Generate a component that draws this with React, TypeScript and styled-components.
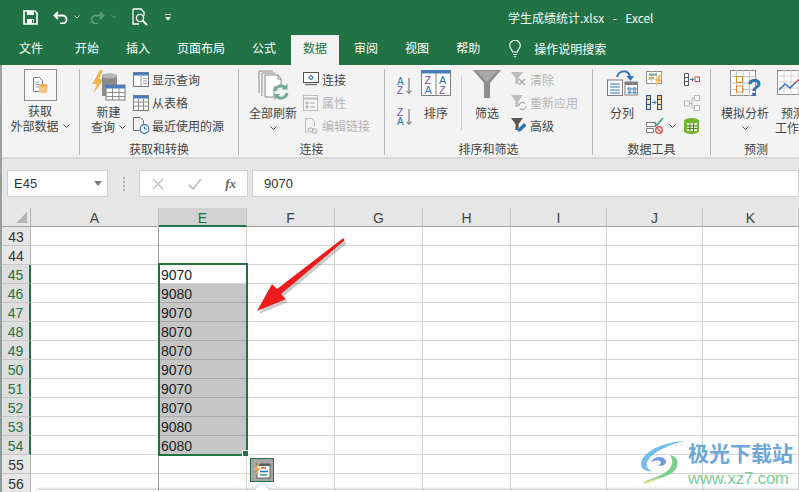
import React from 'react';
import styled, { createGlobalStyle } from 'styled-components';

const GREEN = '#217346';
const CJK = '"Noto Sans CJK SC", "Liberation Sans", sans-serif';
const SHEET_FONT = '"Liberation Sans", "Noto Sans CJK SC", sans-serif';

const GlobalStyle = createGlobalStyle`
  html, body { margin: 0; padding: 0; background: #fff; overflow: hidden; }
  * { box-sizing: border-box; }
`;

const Page = styled.div`
  position: relative;
  display: flex;
  width: 799px;
  height: 492px;
  overflow: hidden;
  font-family: ${CJK};
  font-size: 12px;
  color: #444;
`;

const WindowEdge = styled.div`
  flex: 0 0 2px;
  background: linear-gradient(#217346 0, #217346 65px, #9aa3a2 65px, #8c9a9a 100%);
`;

const Main = styled.div`
  flex: 1;
  min-width: 0;
  display: flex;
  flex-direction: column;
`;

/* title bar */
const TitleBar = styled.div`
  height: 34px;
  background: ${GREEN};
  display: flex;
  align-items: center;
  color: #fff;
`;

const Qat = styled.div`
  width: 506px;
  height: 100%;
  display: flex;
  align-items: center;
  padding-left: 21px;
`;

const QatSlot = styled.span<{ $w: number }>`
  width: ${(p) => p.$w}px;
  display: flex;
  align-items: center;
`;

const TitleText = styled.div`
  white-space: pre;
  word-spacing: 1.5px;
  color: #f2f7f4;
  font-family: ${CJK};
`;

/* tabs */
const TabRow = styled.div`
  height: 31px;
  background: ${GREEN};
  display: flex;
  padding-left: 5px;
  padding-top: 1px;
  gap: 3px;
`;

const Tab = styled.div<{ $active?: boolean }>`
  padding: 0 12px;
  height: 30px;
  line-height: 26px;
  background: ${(p) => (p.$active ? '#f3f3f3' : 'transparent')};
  color: ${(p) => (p.$active ? GREEN : '#fff')};
  &:first-child { margin-right: 5px; }
`;

const TellMe = styled.div`
  display: flex;
  align-items: center;
  height: 27px;
  margin-left: 14px;
  gap: 13px;
  color: #fff;
`;

/* ribbon */
const Ribbon = styled.div`
  height: 94px;
  flex: none;
  background: #f3f3f3;
  border-bottom: 2px solid #d8d8d8;
  padding-top: 4px;
  display: flex;
  overflow: hidden;
`;

const Group = styled.div<{ $w: number; $last?: boolean }>`
  flex: none;
  width: ${(p) => p.$w}px;
  height: 86px;
  display: flex;
  flex-direction: column;
  justify-content: space-between;
  border-right: ${(p) => (p.$last ? 'none' : '1px solid #b4b4b4')};
`;

const GroupBody = styled.div`
  display: flex;
  align-items: flex-start;
`;

const GroupLabel = styled.div<{ $pad?: number }>`
  text-align: center;
  line-height: 13px;
  padding-right: ${(p) => p.$pad || 0}px;
`;

const Large = styled.div<{ $w: number; $ml?: number }>`
  flex: none;
  width: ${(p) => p.$w}px;
  margin-left: ${(p) => p.$ml || 0}px;
  display: flex;
  flex-direction: column;
  align-items: center;
  white-space: nowrap;
`;

const LargeIcon = styled.div<{ $h?: number }>`
  height: ${(p) => p.$h || 34}px;
  display: flex;
  align-items: flex-start;
  justify-content: center;
  padding-top: 1px;
`;

const LargeLine = styled.div`
  height: 15px;
  line-height: 15px;
  display: flex;
  align-items: center;
  justify-content: center;
  gap: 4px;
`;

const BoxedIcon = styled.div`
  width: 33px;
  height: 32px;
  margin-top: -1px;
  border: 1px solid #8a8a8a;
  background: #f8f8f8;
  display: flex;
  align-items: center;
  justify-content: center;
`;

const SmallCol = styled.div<{ $ml?: number }>`
  flex: none;
  margin-top: -1px;
  margin-left: ${(p) => p.$ml || 0}px;
  display: flex;
  flex-direction: column;
`;

const SmallItem = styled.div<{ $off?: boolean }>`
  height: 23px;
  display: flex;
  align-items: center;
  white-space: nowrap;
  color: ${(p) => (p.$off ? '#b4b4b4' : '#444')};
`;

const SmallIcon = styled.span`
  width: 19px;
  display: flex;
  align-items: center;
`;

const SortCol = styled.div`
  flex: none;
  margin: 8px 0 0 12px;
  display: flex;
  flex-direction: column;
  gap: 13px;
`;

const ThinRule = styled.div`
  flex: none;
  width: 1px;
  height: 55px;
  margin: 6px 0 0 7px;
  background: #cfcfcf;
`;

/* formula bar */
const FormulaBar = styled.div`
  height: 49px;
  flex: none;
  background: #e6e6e6;
  display: flex;
  align-items: center;
  padding-left: 5px;
`;

const BarBox = styled.div<{ $w?: number; $ml?: number }>`
  height: 27px;
  margin-left: ${(p) => p.$ml || 0}px;
  ${(p) => (p.$w ? `width: ${p.$w}px; flex: none;` : 'flex: 1;')}
  background: #fff;
  border: 1px solid #d0d0d0;
  display: flex;
  align-items: center;
`;

const NameText = styled.span`
  flex: 1;
  padding-left: 6px;
  font-size: 13px;
  font-family: ${SHEET_FONT};
  color: #333;
`;

const Grip = styled.span`
  width: 31px;
  flex: none;
  display: flex;
  flex-direction: column;
  align-items: center;
  gap: 2px;
  i {
    width: 2px;
    height: 2px;
    background: #b0b0b0;
  }
`;

const FxSlots = styled.div`
  display: flex;
  align-items: center;
  justify-content: space-between;
  width: 100%;
  padding: 0 11px 0 12px;
`;

const FormulaText = styled.span`
  padding-left: 11px;
  font-size: 13px;
  font-family: ${SHEET_FONT};
  color: #333;
`;

/* sheet */
const Sheet = styled.div`
  position: relative;
  flex: 1;
  background: #fff;
  display: grid;
  grid-template-columns: 29px 128px repeat(4, 88px) repeat(3, 96px) 4px;
  grid-auto-rows: 19px;
  font-family: ${SHEET_FONT};
  font-size: 14px;
  overflow: hidden;
`;

const Corner = styled.div`
  background: #e6e6e6;
  border-right: 1px solid #b5b5b5;
  border-bottom: 1px solid #9f9f9f;
  display: flex;
  align-items: center;
  justify-content: flex-end;
  padding-right: 3px;
`;

const ColHead = styled.div<{ $sel?: boolean }>`
  background: ${(p) => (p.$sel ? '#d2d2d2' : '#e6e6e6')};
  color: ${(p) => (p.$sel ? GREEN : '#444')};
  border-right: 1px solid #c6c6c6;
  border-bottom: ${(p) => (p.$sel ? `2px solid ${GREEN}` : '1px solid #9f9f9f')};
  text-align: center;
  line-height: 18px;
  padding-top: 1px;
`;

const RowHead = styled.div<{ $sel?: boolean }>`
  background: ${(p) => (p.$sel ? '#dedede' : '#e6e6e6')};
  color: ${(p) => (p.$sel ? GREEN : '#333')};
  border-right: ${(p) => (p.$sel ? `2px solid ${GREEN}` : '1px solid #b5b5b5')};
  border-bottom: 1px solid #c6c6c6;
  text-align: center;
  line-height: 20px;
`;

const Cell = styled.div<{ $fill?: boolean; $mark?: boolean }>`
  background: ${(p) => (p.$fill ? '#c6c6c6' : '#fff')};
  border-right: 1px solid #d4d4d4;
  border-bottom: 1px solid ${(p) => (p.$fill ? '#a9a9a9' : '#d4d4d4')};
  ${(p) => (p.$mark ? 'box-shadow: -1px 0 0 #a0a0a0;' : '')}
  padding-left: 2px;
  line-height: 20px;
  color: #222;
`;

const Selection = styled.div`
  position: absolute;
  left: 156px;
  top: 55px;
  width: 90px;
  height: 193px;
  border: 2px solid ${GREEN};
  pointer-events: none;
`;

const FillHandle = styled.div`
  position: absolute;
  right: -3px;
  bottom: -3px;
  width: 7px;
  height: 7px;
  background: ${GREEN};
  border: 1px solid #fff;
`;

const QuickButton = styled.div`
  position: absolute;
  left: 248px;
  top: 250px;
  width: 24px;
  height: 24px;
  background: #a6a6a6;
  border: 1px solid ${GREEN};
  display: flex;
  align-items: center;
  justify-content: center;
`;

const PopupEdge = styled.div`
  position: absolute;
  left: 35px;
  top: 282px;
  width: 762px;
  height: 4px;
  background: #fff;
  box-shadow: 0 -1px 3px rgba(0, 0, 0, 0.25);
`;

const PopupTip = styled.div`
  position: absolute;
  left: 254px;
  top: 277px;
  width: 12px;
  height: 12px;
  background: #fff;
  transform: rotate(45deg);
  box-shadow: -1px -1px 2px rgba(0, 0, 0, 0.15);
`;

const ArrowLayer = styled.svg`
  position: absolute;
  left: 249px;
  top: 25px;
`;

const Watermark = styled.div`
  position: absolute;
  left: 640px;
  top: 440px;
  display: flex;
  opacity: 0.88;
`;

const WatermarkText = styled.div`
  margin-left: 2px;
  margin-top: -1px;
  display: flex;
  flex-direction: column;
`;

const WatermarkName = styled.div`
  font-family: ${CJK};
  font-weight: 700;
  font-size: 21px;
  line-height: 26px;
  color: #5b9bd5;
  white-space: nowrap;
`;

const WatermarkUrl = styled.div`
  font-family: ${SHEET_FONT};
  font-size: 16.5px;
  line-height: 20px;
  margin-top: 3px;
  color: #66c887;
`;

/* icons */
const Chevron = () => (
  <svg width="7" height="4" viewBox="0 0 7 4">
    <path d="M.5.5 3.5 3.5 6.5.5" fill="none" stroke="#555" strokeWidth="1" />
  </svg>
);

const SaveIcon = () => (
  <svg width="15" height="15" viewBox="0 0 15 15">
    <path d="M1 1h11l2 2v11H1z" fill="none" stroke="#fff" strokeWidth="1.6" />
    <path d="M4 1h7v4H4zM4 9h7v5H4z" fill="#fff" />
    <path d="M9 10h1.4v3H9z" fill={GREEN} />
  </svg>
);

const UndoIcon = ({ color }: { color: string }) => (
  <svg width="15" height="13" viewBox="0 0 15 13">
    <path d="M5 1 1.5 4.5 5 8M2 4.5h7.5a4 4 0 0 1 0 8H7" fill="none" stroke={color} strokeWidth="1.8" />
  </svg>
);

const RedoIcon = () => (
  <svg width="15" height="13" viewBox="0 0 15 13">
    <path d="M10 1l3.5 3.5L10 8M13 4.5H5.5a4 4 0 0 0 0 8H8" fill="none" stroke="#5e9b7c" strokeWidth="1.8" />
  </svg>
);

const QatChevron = ({ color }: { color: string }) => (
  <svg width="6" height="4" viewBox="0 0 6 4">
    <path d="M.5.5 3 3 5.5.5" fill="none" stroke={color} strokeWidth="1" />
  </svg>
);

const PreviewIcon = () => (
  <svg width="16" height="18" viewBox="0 0 16 18">
    <path d="M1 1h8l3 3v4M1 1v15h6" fill="none" stroke="#fff" strokeWidth="1.3" />
    <circle cx="8" cy="10" r="3.6" fill="none" stroke="#fff" strokeWidth="1.4" />
    <path d="M10.6 12.6 15 17" stroke="#fff" strokeWidth="2" />
  </svg>
);

const CustomizeIcon = () => (
  <svg width="6" height="7" viewBox="0 0 6 7">
    <path d="M0 .5h6" stroke="#fff" />
    <path d="M0 3h6L3 6.5z" fill="#fff" />
  </svg>
);

const BulbIcon = () => (
  <svg width="12" height="18" viewBox="0 0 12 18">
    <path d="M3.5 12c0-2.500-2.800-3.500-2.800-6.500a5.300 5.300 0 0 1 10.600 0c0 3-2.800 4-2.800 6.500zM4 14.500h4M4.800 16.800h2.400" fill="none" stroke="#fff" strokeWidth="1.1" />
  </svg>
);

const GetDataIcon = () => (
  <svg width="17" height="17" viewBox="0 0 17 17">
    <path d="M1.500.5h6l3 3v11h-9z" fill="#fff" stroke="#7a7a7a" />
    <path d="M3.500 5h4M3.500 7.500h4M3.500 10h4" stroke="#9a9a9a" />
    <path d="M7 8.500c0-2 8.500-2 8.500 0v6c0 2-8.500 2-8.500 0z" fill="#f0c682" />
    <ellipse cx="11.250" cy="8.500" rx="4.250" ry="1.300" fill="#e7a94e" />
  </svg>
);

const NewQueryIcon = () => (
  <svg width="34" height="34" viewBox="0 0 34 34">
    <path d="M8 0 0 14h5L1 24 12 9H7l4-9z" fill="#f2b54f" />
    <path d="M10 6c0-3.500 15-3.500 15 0v20H10z" fill="#8c8c8c" />
    <ellipse cx="17.500" cy="6" rx="7.500" ry="2.400" fill="#b5b5b5" />
    <rect x="14" y="15" width="19" height="15" fill="#fff" stroke="#7d7d7d" />
    <rect x="14" y="15" width="19" height="3.500" fill="#4a7ebb" />
    <path d="M14 22.500h19M14 26.500h19M20.500 18v12M27 18v12" stroke="#8c8c8c" />
  </svg>
);

const ShowQueryIcon = () => (
  <svg width="16" height="15" viewBox="0 0 16 15">
    <rect x=".5" y=".5" width="15" height="14" fill="#fff" stroke="#7d7d7d" />
    <rect x=".5" y=".5" width="15" height="3" fill="#4a7ebb" />
    <path d="M8 4v10M10 6.500h4M10 9h4M10 11.500h4" stroke="#9a9a9a" />
  </svg>
);

const FromTableIcon = () => (
  <svg width="16" height="16" viewBox="0 0 16 16">
    <rect x=".5" y=".5" width="15" height="15" fill="#fff" stroke="#7d7d7d" />
    <rect x=".5" y=".5" width="15" height="3" fill="#4a7ebb" />
    <path d="M.5 7h15M.5 11h15M5.500 3.500v12M10.500 3.500v12" stroke="#8c8c8c" />
  </svg>
);

const RecentIcon = () => (
  <svg width="17" height="17" viewBox="0 0 17 17">
    <path d="M.5.500h7l3 3v8M.5.500v13h6" fill="none" stroke="#6f6f6f" />
    <circle cx="11.500" cy="12" r="4.300" fill="#fff" stroke="#2f75b5" strokeWidth="1.200" />
    <path d="M11.500 9.500V12h2" fill="none" stroke="#2f75b5" />
  </svg>
);

const RefreshIcon = () => (
  <svg width="31" height="30" viewBox="0 0 31 30">
    <path d="M1 1h14M1 1v22M4 3h13M4 3v23" fill="none" stroke="#8a8a8a" />
    <path d="M7 5h13l3 4v8h-7v10H7z" fill="#fff" stroke="#8a8a8a" />
    <path d="M20 5v4h3" fill="none" stroke="#8a8a8a" />
    <path d="M17 21a6 6 0 0 1 10.500-3M29 23a6 6 0 0 1-10.500 3" fill="none" stroke="#6fae94" strokeWidth="3" />
    <path d="M29.500 13.500v6h-6zM16.500 30v-6h6z" fill="#6fae94" />
  </svg>
);

const ConnectIcon = () => (
  <svg width="16" height="15" viewBox="0 0 16 15">
    <rect x=".5" y=".5" width="15" height="10" fill="#fff" stroke="#555" />
    <path d="M8 2.500l3 3-3 3-3-3z" fill="#2f75b5" />
    <path d="M6.500 5.500l1.500-1.500 1.500 1.500L8 7z" fill="#fff" />
    <path d="M2 12.500h12" stroke="#777" strokeWidth="1.400" />
  </svg>
);

const PropsIcon = () => (
  <svg width="15" height="16" viewBox="0 0 15 16">
    <rect x=".5" y=".5" width="14" height="15" fill="#f8f8f8" stroke="#bdbdbd" />
    <path d="M.5 3.500h14" stroke="#bdbdbd" strokeWidth="2" />
    <path d="M3 7h2v2H3zM3 11h2v2H3zM7 8h5M7 12h5" fill="none" stroke="#a8a8a8" />
  </svg>
);

const LinksIcon = () => (
  <svg width="16" height="16" viewBox="0 0 16 16">
    <path d="M2.500.5h6l3 3v5M2.500.5v14h2" fill="none" stroke="#bdbdbd" />
    <rect x="5" y="10" width="5" height="4" rx="2" fill="none" stroke="#a8a8a8" />
    <rect x="9" y="11" width="5" height="4" rx="2" fill="none" stroke="#a8a8a8" />
  </svg>
);

const SortLetter = styled.text<{ $c: string }>`
  font-family: "Liberation Sans", sans-serif;
  font-size: 10px;
  fill: ${(p) => p.$c};
`;

const SortSmallIcon = ({ top, bottom, topC, bottomC }: { top: string; bottom: string; topC: string; bottomC: string }) => (
  <svg width="16" height="18" viewBox="0 0 16 18">
    <SortLetter $c={topC} x="0" y="8">{top}</SortLetter>
    <SortLetter $c={bottomC} x="0" y="17">{bottom}</SortLetter>
    <path d="M12 1v15M9.500 13.500 12 16.500l2.500-3" fill="none" stroke="#666" />
  </svg>
);

const SortBigLetter = styled.text<{ $c: string }>`
  font-family: "Liberation Sans", sans-serif;
  font-size: 11px;
  fill: ${(p) => p.$c};
`;

const SortBigIcon = () => (
  <svg width="30" height="26" viewBox="0 0 30 26">
    <rect x=".5" y="1" width="29" height="24.500" fill="#fff" stroke="#7d7d7d" />
    <rect x="0" y="0" width="30" height="3.500" fill="#4a7ebb" />
    <path d="M15 3v22" stroke="#7d7d7d" />
    <SortBigLetter $c="#7b4fa8" x="3.500" y="13.500">Z</SortBigLetter>
    <SortBigLetter $c="#2f75b5" x="3.500" y="24">A</SortBigLetter>
    <SortBigLetter $c="#2f75b5" x="18" y="13.500">A</SortBigLetter>
    <SortBigLetter $c="#7b4fa8" x="18" y="24">Z</SortBigLetter>
  </svg>
);

const FunnelIcon = () => (
  <svg width="28" height="28" viewBox="0 0 28 28">
    <path d="M0 0h28L17 13v15h-6V13z" fill="#8d8d8d" />
    <path d="M3.500 1 14 12 24.500 1z" fill="#a9a9a9" />
  </svg>
);

const ClearIcon = () => (
  <svg width="17" height="17" viewBox="0 0 17 17">
    <path d="M0 1h12L7.500 7v6h-3V7z" fill="#bdbdbd" />
    <path d="M8 8l6 6M14 8l-6 6" stroke="#a8a8a8" strokeWidth="1.300" />
  </svg>
);

const ReapplyIcon = () => (
  <svg width="17" height="17" viewBox="0 0 17 17">
    <path d="M0 1h12L7.500 7v6h-3V7z" fill="#bdbdbd" />
    <path d="M8 12a3.500 3.500 0 0 1 6-2.500M15 12a3.500 3.500 0 0 1-6 2.500" fill="none" stroke="#a8a8a8" strokeWidth="1.200" />
  </svg>
);

const AdvancedIcon = () => (
  <svg width="17" height="17" viewBox="0 0 17 17">
    <path d="M0 1h12L7.500 7v6h-3V7z" fill="#555" />
    <path d="M6.500 15l1-3.500 5.500-5.500 2.500 2.500-5.500 5.500z" fill="#2f75b5" />
  </svg>
);

const TextColIcon = () => (
  <svg width="31" height="26" viewBox="0 0 31 26">
    <rect x=".5" y="10" width="15" height="15.500" fill="#fff" stroke="#7d7d7d" />
    <path d="M3 14h10M3 17h10M3 20h10M3 23h10" stroke="#2f75b5" />
    <rect x="18" y="12" width="12.500" height="13" fill="#fff" stroke="#7d7d7d" />
    <path d="M18 12h12.500v3H18z" fill="#7d7d7d" />
    <path d="M21 18h3v2h-3zM26 18h3v2h-3zM21 22h3v1h-3zM26 22h3v1h-3z" fill="none" stroke="#2f75b5" />
    <path d="M10 7c2-7 11-8 13 0" fill="none" stroke="#2f75b5" strokeWidth="2" />
    <path d="M19.500 6h7.500l-3.500 5z" fill="#2f75b5" />
  </svg>
);

const FlashIcon = () => (
  <svg width="18" height="17" viewBox="0 0 18 17">
    <rect x=".5" y=".5" width="15" height="12" fill="#fff" stroke="#8d8d8d" />
    <path d="M.5 4.500h15M.5 8.500h15M5.500.5v12M10.500.5v12" stroke="#d4d4d4" />
    <rect x="3" y="2.500" width="8" height="2" fill="#6fae94" />
    <rect x="3" y="6" width="5" height="2" fill="#e9a24a" />
    <path d="M13 4l-3.500 6h2.500L9.500 16 16 8.500h-3L15.500 4z" fill="#f2b54f" />
  </svg>
);

const DupIcon = () => (
  <svg width="16" height="15" viewBox="0 0 16 15">
    <path d="M0 0h5v15H0zM11 0h5v15h-5z" fill="#2f4f7f" />
    <path d="M1 1h3v3H1zM12 1h3v3h-3z" fill="#f0c682" />
    <path d="M1 5h3v4H1zM12 5h3v4h-3zM1 10h3v4H1zM12 10h3v4h-3z" fill="#f7e2b8" />
    <path d="M6 7.500h3.500M8 5.500l2 2-2 2" fill="none" stroke="#2f75b5" />
  </svg>
);

const ValidateIcon = () => (
  <svg width="18" height="16" viewBox="0 0 18 16">
    <path d="M.5 4.500h9v4h-9zM.5 10.500h7v4h-7z" fill="#fff" stroke="#7d7d7d" />
    <path d="M8 4l3 3 6-7" fill="none" stroke="#4e9a78" strokeWidth="1.600" />
    <circle cx="13" cy="12" r="3.300" fill="#fff" stroke="#d8483a" strokeWidth="1.300" />
    <path d="M10.800 9.800l4.400 4.400" stroke="#d8483a" strokeWidth="1.200" />
  </svg>
);

const ConsolidateIcon = () => (
  <svg width="16" height="13" viewBox="0 0 16 13">
    <path d="M.5.500h4v12h-4z" fill="#fff" stroke="#555" />
    <path d="M.5 4.500h4M.5 8.500h4" stroke="#555" />
    <path d="M6 6.500h3M8 5l1.500 1.500L8 8" fill="none" stroke="#2f75b5" />
    <rect x="11" y="4" width="4.500" height="4.500" fill="#fff" stroke="#d8483a" />
  </svg>
);

const RelationIcon = () => (
  <svg width="16" height="16" viewBox="0 0 16 16">
    <path d="M.5 6h5v5h-5zM10.500.5h5v5h-5zM10.500 10.500h5v5h-5z" fill="#f8f8f8" stroke="#b5b5b5" />
    <path d="M5.500 8.500H8V3h2.500M8 8.500V13h2.500" fill="none" stroke="#b5b5b5" />
  </svg>
);

const ModelIcon = () => (
  <svg width="15" height="16" viewBox="0 0 15 16">
    <path d="M0 3c0-4 15-4 15 0v10c0 4-15 4-15 0z" fill="#74b52e" />
    <path d="M3 5h10v8H3z" fill="#e6f2d5" />
    <path d="M6 5v8M9.500 5v8M3 8h10M3 10.500h10" stroke="#4c7d1c" />
  </svg>
);

const HelpMark = styled.text`
  font-family: "Liberation Sans", sans-serif;
  font-weight: 700;
  font-size: 24px;
  fill: #2f75b5;
`;

const WhatIfIcon = () => (
  <svg width="31" height="28" viewBox="0 0 31 28">
    <rect x=".5" y=".5" width="25" height="25" fill="#fff" stroke="#8a8a8a" />
    <path d="M6.500 0v26M13 0v26M19.500 0v26M0 6.500h26M0 13h26M0 19.500h26" stroke="#c4c4c4" />
    <rect x="6.500" y="6.500" width="6" height="6" fill="#fff" stroke="#e28b2d" />
    <rect x="6.500" y="16" width="6" height="6" fill="#fff" stroke="#e28b2d" />
    <HelpMark x="17" y="26">?</HelpMark>
  </svg>
);

const ForecastIcon = () => (
  <svg width="32" height="27" viewBox="0 0 32 27">
    <rect x=".5" y=".5" width="31" height="24" fill="#fff" stroke="#8a8a8a" />
    <path d="M7 0v25M14 0v25M21 0v25M28 0v25M0 6h32M0 12h32M0 18h32" stroke="#d0d0d0" />
    <path d="M2 20l6-6 5 4 6-6" fill="none" stroke="#2f75b5" strokeWidth="1.500" />
    <path d="M19 12l5-4 3 2 4-6" fill="none" stroke="#d8483a" strokeWidth="1.500" />
  </svg>
);

const CancelIcon = () => (
  <svg width="12" height="12" viewBox="0 0 12 12">
    <path d="M1 1l10 10M11 1 1 11" stroke="#c4c4c4" strokeWidth="1.500" />
  </svg>
);

const CheckIcon = () => (
  <svg width="14" height="12" viewBox="0 0 14 12">
    <path d="M1 7l4 4 8-10" fill="none" stroke="#c4c4c4" strokeWidth="2" />
  </svg>
);

const FxText = styled.span`
  font-family: "Liberation Serif", serif;
  font-style: italic;
  font-weight: 700;
  font-size: 13px;
  color: #666;
`;

const QuickIcon = () => (
  <svg width="18" height="17" viewBox="0 0 18 17">
    <rect x="4" y="2" width="13" height="14" fill="#fff" stroke="#5c5c5c" />
    <path d="M4 2h13v2H4z" fill="#5c5c5c" />
    <path d="M8 6h5" stroke="#d8583a" strokeWidth="1.600" />
    <path d="M7 9.500h8" stroke="#2f75b5" strokeWidth="1.600" />
    <path d="M7 13h7" stroke="#4e9a78" strokeWidth="1.600" />
    <path d="M6 0 1 8h3l-2 6 6-8H5l2-6z" fill="#e9b458" />
  </svg>
);

const SwirlLogo = () => (
  <svg width="46" height="44" viewBox="0 0 46 44">
    <path d="M44 1C28 2 8 8 2 20c-3 7 2 12 10 11-5-2-7-6-4-11C13 12 28 5 44 1z" fill="#5fb4ea" />
    <path d="M11 22c3-6 13-7 15-1 1 4-5 6-9 4 3 0 5-2 3-4-3-2-6 0-9 1z" fill="#5b8fd6" />
    <path d="M30 15c10 2 10 12 2 18-6 4-16 7-29 9 8-3 22-7 27-14 3-5 3-9 0-13z" fill="#6cc97f" />
    <path d="M3 42c6-1 12-3 18-5-5 3-10 6-17 7z" fill="#e4e07a" />
  </svg>
);

const rows = [43, 44, 45, 46, 47, 48, 49, 50, 51, 52, 53, 54, 55, 56];
const values: Record<number, string> = {
  45: '9070', 46: '9080', 47: '9070', 48: '8070', 49: '8070',
  50: '9070', 51: '9070', 52: '8070', 53: '9080', 54: '6080',
};
const columns = ['F', 'G', 'H', 'I', 'J', 'K', ''];

export default function App() {
  return (
    <Page>
      <GlobalStyle />
      <WindowEdge />
      <Main>
        <TitleBar>
          <Qat>
            <QatSlot $w={30}><SaveIcon /></QatSlot>
            <QatSlot $w={21}><UndoIcon color="#fff" /></QatSlot>
            <QatSlot $w={16}><QatChevron color="#cfe3d8" /></QatSlot>
            <QatSlot $w={21}><RedoIcon /></QatSlot>
            <QatSlot $w={21}><QatChevron color="#5e9b7c" /></QatSlot>
            <QatSlot $w={33}><PreviewIcon /></QatSlot>
            <QatSlot $w={8}><CustomizeIcon /></QatSlot>
          </Qat>
          <TitleText>学生成绩统计.xlsx  -  Excel</TitleText>
        </TitleBar>

        <TabRow>
          {['文件', '开始', '插入', '页面布局', '公式'].map((t) => <Tab key={t}>{t}</Tab>)}
          <Tab $active>数据</Tab>
          {['审阅', '视图', '帮助'].map((t) => <Tab key={t}>{t}</Tab>)}
          <TellMe><BulbIcon />操作说明搜索</TellMe>
        </TabRow>

        <Ribbon>
          <Group $w={78}>
            <GroupBody>
              <Large $w={76}>
                <LargeIcon><BoxedIcon><GetDataIcon /></BoxedIcon></LargeIcon>
                <LargeLine>获取</LargeLine>
                <LargeLine>外部数据<Chevron /></LargeLine>
              </Large>
            </GroupBody>
          </Group>

          <Group $w={159}>
            <GroupBody>
              <Large $w={49} $ml={4}>
                <LargeIcon $h={35}><NewQueryIcon /></LargeIcon>
                <LargeLine>新建</LargeLine>
                <LargeLine>查询<Chevron /></LargeLine>
              </Large>
              <SmallCol>
                <SmallItem><SmallIcon><ShowQueryIcon /></SmallIcon>显示查询</SmallItem>
                <SmallItem><SmallIcon><FromTableIcon /></SmallIcon>从表格</SmallItem>
                <SmallItem><SmallIcon><RecentIcon /></SmallIcon>最近使用的源</SmallItem>
              </SmallCol>
            </GroupBody>
            <GroupLabel>获取和转换</GroupLabel>
          </Group>

          <Group $w={146}>
            <GroupBody>
              <Large $w={48} $ml={10}>
                <LargeIcon $h={36}><RefreshIcon /></LargeIcon>
                <LargeLine>全部刷新</LargeLine>
                <LargeLine><Chevron /></LargeLine>
              </Large>
              <SmallCol $ml={6}>
                <SmallItem><SmallIcon><ConnectIcon /></SmallIcon>连接</SmallItem>
                <SmallItem $off><SmallIcon><PropsIcon /></SmallIcon>属性</SmallItem>
                <SmallItem $off><SmallIcon><LinksIcon /></SmallIcon>编辑链接</SmallItem>
              </SmallCol>
            </GroupBody>
            <GroupLabel>连接</GroupLabel>
          </Group>

          <Group $w={208}>
            <GroupBody>
              <SortCol>
                <SortSmallIcon top="A" bottom="Z" topC="#2f75b5" bottomC="#7b4fa8" />
                <SortSmallIcon top="Z" bottom="A" topC="#7b4fa8" bottomC="#2f75b5" />
              </SortCol>
              <Large $w={36} $ml={5}>
                <LargeIcon $h={36}><SortBigIcon /></LargeIcon>
                <LargeLine>排序</LargeLine>
              </Large>
              <ThinRule />
              <Large $w={50}>
                <LargeIcon $h={36}><FunnelIcon /></LargeIcon>
                <LargeLine>筛选</LargeLine>
              </Large>
              <SmallCol $ml={-1}>
                <SmallItem $off><SmallIcon><ClearIcon /></SmallIcon>清除</SmallItem>
                <SmallItem $off><SmallIcon><ReapplyIcon /></SmallIcon>重新应用</SmallItem>
                <SmallItem><SmallIcon><AdvancedIcon /></SmallIcon>高级</SmallItem>
              </SmallCol>
            </GroupBody>
            <GroupLabel>排序和筛选</GroupLabel>
          </Group>

          <Group $w={118}>
            <GroupBody>
              <Large $w={40} $ml={9}>
                <LargeIcon $h={36}><TextColIcon /></LargeIcon>
                <LargeLine>分列</LargeLine>
              </Large>
              <SmallCol $ml={4}>
                <SmallItem><FlashIcon /></SmallItem>
                <SmallItem><DupIcon /></SmallItem>
                <SmallItem><ValidateIcon /></SmallItem>
              </SmallCol>
              <SmallCol $ml={5}>
                <SmallItem />
                <SmallItem />
                <SmallItem><Chevron /></SmallItem>
              </SmallCol>
              <SmallCol $ml={8}>
                <SmallItem><ConsolidateIcon /></SmallItem>
                <SmallItem><RelationIcon /></SmallItem>
                <SmallItem><ModelIcon /></SmallItem>
              </SmallCol>
            </GroupBody>
            <GroupLabel>数据工具</GroupLabel>
          </Group>

          <Group $w={110} $last>
            <GroupBody>
              <Large $w={48} $ml={10}>
                <LargeIcon $h={36}><WhatIfIcon /></LargeIcon>
                <LargeLine>模拟分析</LargeLine>
                <LargeLine><Chevron /></LargeLine>
              </Large>
              <Large $w={36} $ml={6}>
                <LargeIcon $h={36}><ForecastIcon /></LargeIcon>
                <LargeLine>预测</LargeLine>
                <LargeLine>工作表</LargeLine>
              </Large>
            </GroupBody>
            <GroupLabel $pad={20}>预测</GroupLabel>
          </Group>
        </Ribbon>

        <FormulaBar>
          <BarBox $w={101}>
            <NameText>E45</NameText>
            <svg width="13" height="5" viewBox="0 0 13 5"><path d="M0 0h8L4 5z" fill="#7a7a7a" /></svg>
          </BarBox>
          <Grip><i /><i /><i /><i /></Grip>
          <BarBox $w={109}>
            <FxSlots><CancelIcon /><CheckIcon /><FxText>fx</FxText></FxSlots>
          </BarBox>
          <BarBox $ml={4}>
            <FormulaText>9070</FormulaText>
          </BarBox>
        </FormulaBar>

        <Sheet>
          <Corner>
            <svg width="11" height="11" viewBox="0 0 11 11"><path d="M11 0v11H0z" fill="#b5b5b5" /></svg>
          </Corner>
          <ColHead>A</ColHead>
          <ColHead $sel>E</ColHead>
          {columns.map((c) => <ColHead key={c}>{c}</ColHead>)}

          {rows.map((r) => {
            const sel = r >= 45 && r <= 54;
            return (
              <React.Fragment key={r}>
                <RowHead $sel={sel}>{r}</RowHead>
                <Cell />
                <Cell $mark $fill={r >= 46 && r <= 54}>{values[r]}</Cell>
                {columns.map((c) => <Cell key={c} />)}
              </React.Fragment>
            );
          })}

          <Selection><FillHandle /></Selection>
          <PopupEdge />
          <PopupTip />
          <QuickButton><QuickIcon /></QuickButton>
          <ArrowLayer width="100" height="90" viewBox="0 0 100 90">
            <path d="M91 6c1-1 3 0 2 2L30 61l5 5-29 12 15-27 5 5z" fill="#000" opacity=".2" transform="translate(2 3)" />
            <path d="M91 6c1-1 3 0 2 2L30 61l5 5-29 12 15-27 5 5z" fill="#ee1c1c" />
          </ArrowLayer>
        </Sheet>
      </Main>
      <Watermark>
        <SwirlLogo />
        <WatermarkText>
          <WatermarkName>极光下载站</WatermarkName>
          <WatermarkUrl>www.xz7.com</WatermarkUrl>
        </WatermarkText>
      </Watermark>
    </Page>
  );
}
